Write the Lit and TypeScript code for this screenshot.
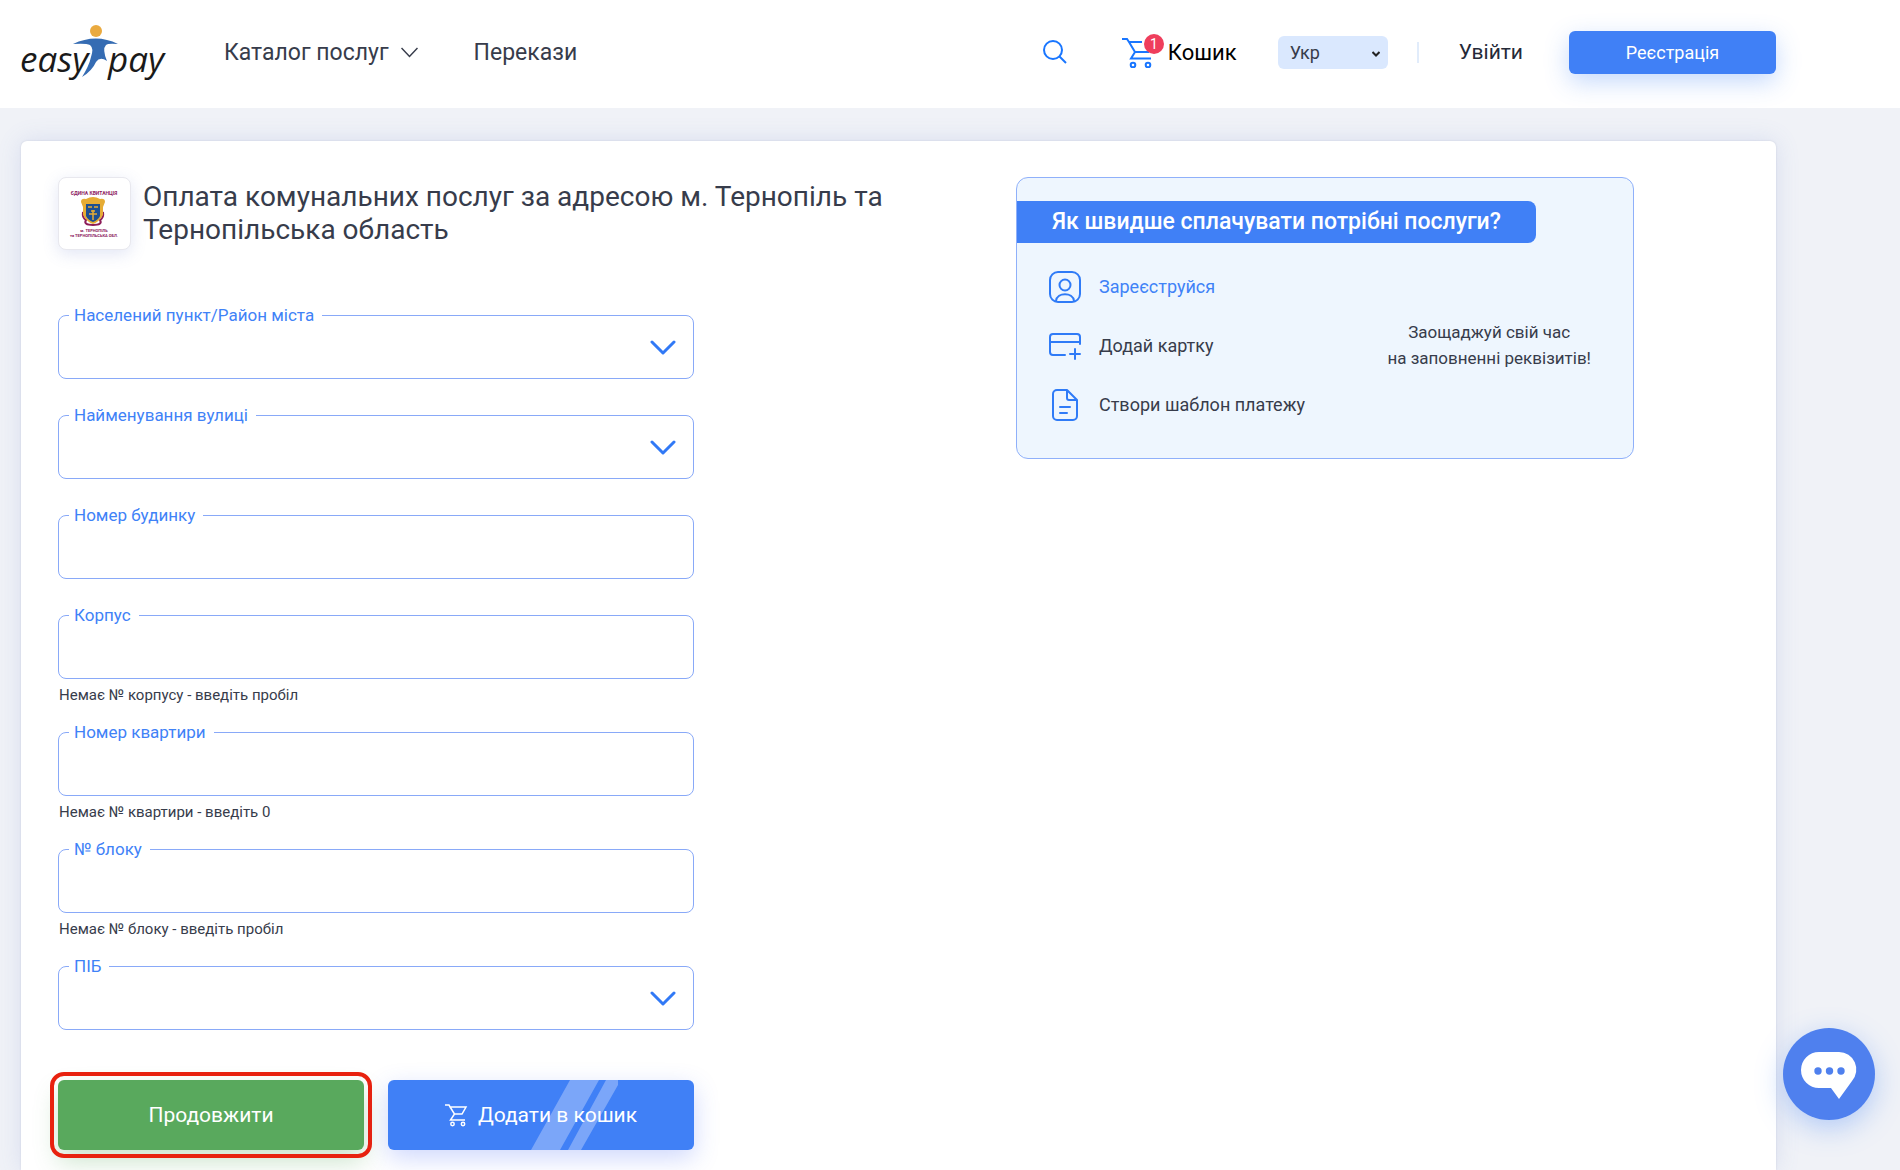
import { LitElement, html, css, nothing } from "lit";
import { customElement } from "lit/decorators.js";

interface Field {
  id: string;
  label: string;
  kind: "select" | "text";
  hint?: string;
}

const FIELDS: Field[] = [
  { id: "district", label: "Населений пункт/Район міста", kind: "select" },
  { id: "street", label: "Найменування вулиці", kind: "select" },
  { id: "house", label: "Номер будинку", kind: "text" },
  { id: "building", label: "Корпус", kind: "text", hint: "Немає № корпусу - введіть пробіл" },
  { id: "flat", label: "Номер квартири", kind: "text", hint: "Немає № квартири - введіть 0" },
  { id: "block", label: "№ блоку", kind: "text", hint: "Немає № блоку - введіть пробіл" },
  { id: "person", label: "ПІБ", kind: "select" },
];

@customElement("site-header")
class SiteHeader extends LitElement {
  static styles = css`
    :host { display: block; background: #fff; }
    .bar {
      box-sizing: border-box;
      height: 108px;
      padding: 0 124px 4px 20px;
      display: flex;
      align-items: center;
      font-size: 22px;
      color: #373c4b;
    }
    a { color: inherit; text-decoration: none; }
    svg { display: block; fill: none; }
    .logo { margin-right: 54px; }
    .logo text {
      font-family: "Open Sans", sans-serif;
      font-style: italic; font-weight: 500; font-size: 35px; fill: #1a1a1a;
    }
    .nav { display: flex; align-items: center; gap: 56px; flex: 1; font-size: 23px; }
    .menu {
      display: flex; align-items: center; gap: 12px;
      border: 0; padding: 0; background: none; font: inherit; color: inherit;
    }
    .search { border: 0; padding: 0; background: none; margin-right: 55px; }
    .cart { display: flex; align-items: center; gap: 4px; color: #000; margin-right: 41px; }
    .cart-icon { position: relative; width: 42px; height: 32px; }
    .badge {
      position: absolute; left: 22px; top: -2px;
      width: 20px; height: 20px; border-radius: 50%;
      background: #ef3e5c; color: #fff;
      font-size: 14px; line-height: 20px; text-align: center;
    }
    .lang { position: relative; margin-right: 29px; }
    .lang select {
      appearance: none; display: block; border: 0; border-radius: 6px;
      width: 110px; height: 33px; padding: 0 12px;
      background: #dae8fe; color: #373c4b; font: 18px Roboto, sans-serif;
    }
    .lang svg { position: absolute; right: 8px; top: 15px; pointer-events: none; }
    .rule { width: 2px; height: 21px; background: #e1ecfb; margin-right: 40px; }
    .login { color: #252938; font-size: 21px; margin-right: 46px; }
    .register {
      width: 207px; height: 43px; border: 0; border-radius: 6px;
      background: #4080f6; color: #fff; font: 18px Roboto, sans-serif;
      box-shadow: 0 8px 24px rgba(64, 128, 246, 0.3);
    }
  `;

  render() {
    return html`
      <header class="bar">
        <a class="logo" href="#" aria-label="easypay">
          <svg width="150" height="62" viewBox="0 0 150 62">
            <text x="0" y="51">easy</text>
            <text x="88" y="51">pay</text>
            <circle cx="76" cy="10" r="6" fill="#eaaa3f" />
            <path fill="#356cb3" d="M53 23Q76 12 98 23Q88 22 86 24Q82 28 87 40Q80 35 76 41Q72 50 62 56Q69 45 71 36Q74 27 70 24Q66 22 53 23Z" />
          </svg>
        </a>
        <nav class="nav">
          <button class="menu">
            Каталог послуг
            <svg width="17" height="11" viewBox="0 0 17 11" stroke="#373c4b" stroke-width="1.500"><path d="M.500 1l8 8.500 8-8.500" /></svg>
          </button>
          <a href="#">Перекази</a>
        </nav>
        <button class="search" aria-label="Пошук">
          <svg width="24" height="24" viewBox="0 0 24 24" stroke="#1976ff" stroke-width="2">
            <circle cx="10" cy="10" r="9" /><path d="M16.500 16.500L23 23" />
          </svg>
        </button>
        <a class="cart" href="#">
          <span class="cart-icon">
            <svg width="31" height="32" viewBox="0 0 31 32" stroke="#1976ff" stroke-width="2">
              <path d="M0 3h5l2 3M7 6h13M7 6l6 10h14M13 16l-4 6.500h20" />
              <circle cx="11" cy="29" r="2.300" /><circle cx="26" cy="29" r="2.300" />
            </svg>
            <span class="badge">1</span>
          </span>
          Кошик
        </a>
        <div class="lang">
          <select aria-label="Мова"><option>Укр</option></select>
          <svg width="8" height="6" viewBox="0 0 8 6" stroke="#222" stroke-width="2"><path d="M.500 1L4 4.500 7.500 1" /></svg>
        </div>
        <span class="rule"></span>
        <a class="login" href="#">Увійти</a>
        <button class="register">Реєстрація</button>
      </header>
    `;
  }
}

@customElement("outlined-field")
class OutlinedField extends LitElement {
  static properties = { field: { attribute: false } };
  declare field: Field;

  static styles = css`
    :host { display: block; }
    .frame {
      position: relative; box-sizing: border-box; min-width: 0; height: 74px;
      margin: 0; padding: 0 0 0 10px;
      border: 1px solid #89a9f8; border-radius: 8px;
    }
    .legend { padding: 0 8px 0 5px; height: 20px; font-size: 17px; line-height: 20px; color: #3f82f7; }
    .control {
      appearance: none; box-sizing: border-box; display: block;
      width: 100%; height: 52px; padding: 0 60px 0 6px;
      border: 0; outline: 0; background: none; font: 18px Roboto, sans-serif; color: #373c4b;
    }
    .chevron { position: absolute; right: 17px; top: 15px; fill: none; pointer-events: none; }
    .hint { margin: 6px 0 0 1px; font-size: 15px; line-height: 20px; color: #373c4b; }
  `;

  render() {
    const f = this.field;
    return html`
      <fieldset class="frame">
        <legend class="legend"><label for=${f.id}>${f.label}</label></legend>
        ${f.kind === "select"
          ? html`<select class="control" id=${f.id}><option></option></select>
              <svg class="chevron" width="26" height="16" viewBox="0 0 26 16" stroke="#3179f6" stroke-width="3" stroke-linecap="round" stroke-linejoin="round">
                <path d="M2 2l11 11L24 2" />
              </svg>`
          : html`<input class="control" id=${f.id} type="text" />`}
      </fieldset>
      ${f.hint ? html`<p class="hint">${f.hint}</p>` : nothing}
    `;
  }
}

@customElement("tips-panel")
class TipsPanel extends LitElement {
  static styles = css`
    :host {
      display: block; box-sizing: border-box; height: 282px;
      border: 1px solid #8fb0fa; border-radius: 12px; background: #eef6fe; color: #373c4b;
    }
    .title {
      width: fit-content; margin: 23px 0 0; padding: 0 35px; border-radius: 0 8px 8px 0;
      background: #4080f6; color: #fff; font-size: 23px; font-weight: 500; line-height: 42px;
    }
    .body { display: flex; justify-content: space-between; padding: 14px 42px 0 32px; }
    .steps { margin: 0; padding: 0; list-style: none; }
    .step { display: flex; align-items: center; gap: 18px; height: 59px; font-size: 18px; }
    .step svg { fill: none; stroke: #2f7bf7; stroke-width: 2; stroke-linecap: round; stroke-linejoin: round; }
    .step a { color: #3f82f7; text-decoration: none; }
    .note { margin: 62px 0 0; font-size: 17px; line-height: 26px; text-align: center; }
  `;

  render() {
    return html`
      <h2 class="title">Як швидше сплачувати потрібні послуги?</h2>
      <div class="body">
        <ul class="steps">
          <li class="step">
            <svg width="32" height="32" viewBox="0 0 32 32">
              <rect x="1" y="1" width="30" height="30" rx="8" /><circle cx="16" cy="14" r="5.500" />
              <path d="M7 30c1-9 17-9 18 0" />
            </svg>
            <a href="#">Зареєструйся</a>
          </li>
          <li class="step">
            <svg width="32" height="32" viewBox="0 0 32 32">
              <path d="M31 14V7a3 3 0 0 0-3-3H4a3 3 0 0 0-3 3v15a3 3 0 0 0 3 3h12M1 12h30M21 24h10M26 19v10" />
            </svg>
            Додай картку
          </li>
          <li class="step">
            <svg width="32" height="32" viewBox="0 0 32 32">
              <path d="M18 1H8a4 4 0 0 0-4 4v22a4 4 0 0 0 4 4h16a4 4 0 0 0 4-4V11zM18 1v8a2 2 0 0 0 2 2h8M11 18h10M11 24h7" />
            </svg>
            Створи шаблон платежу
          </li>
        </ul>
        <p class="note">Заощаджуй свій час<br />на заповненні реквізитів!</p>
      </div>
    `;
  }
}

@customElement("app-root")
class AppRoot extends LitElement {
  static styles = css`
    :host {
      display: flex; flex-direction: column; min-height: 100vh;
      background: #f0f2f7; font-family: Roboto, sans-serif; color: #373c4b;
    }
    .main { flex: 1; display: flex; flex-direction: column; padding: 33px 124px 0 21px; }
    .card {
      flex: 1; display: grid; grid-template-columns: minmax(0, 950fr) minmax(0, 618fr); column-gap: 8px;
      align-items: start; padding: 36px 142px 20px 37px;
      background: #fff; border-radius: 6px 6px 0 0; box-shadow: 0 0 24px rgba(96, 116, 200, 0.16), 0 0 2px rgba(80, 90, 130, 0.2);
    }
    .heading { display: flex; gap: 12px; }
    .emblem {
      box-sizing: border-box; flex: none; width: 73px; height: 73px;
      border: 1px solid #e8e8ee; border-radius: 8px; background: #fff;
      box-shadow: 0 4px 16px rgba(96, 116, 200, 0.18);
    }
    .emblem svg { display: block; }
    .title { margin: 3px 0 0; max-width: 760px; font-size: 28px; font-weight: 400; line-height: 33px; }
    .form { width: 636px; max-width: 100%; margin-top: 55px; display: flex; flex-direction: column; gap: 26px; }
    .with-hint { margin-bottom: -9px; }
    .actions { display: grid; grid-template-columns: 1fr 1fr; gap: 24px; margin-top: 24px; }
    .action {
      position: relative; display: flex; align-items: center; justify-content: center;
      height: 70px; border: 0; border-radius: 6px; padding: 0; color: #fff; font: 21px Roboto, sans-serif;
    }
    .next { background: #59a95d; outline: 4px solid #e8220f; outline-offset: 4px; box-shadow: 0 12px 24px rgba(89, 169, 93, 0.3); }
    .add { background: #4080f6; box-shadow: 0 8px 24px rgba(64, 100, 246, 0.25); }
    .shine { position: absolute; left: 143px; top: 0; }
    .add-label { position: relative; display: flex; align-items: center; gap: 10px; }
    .chat {
      position: fixed; right: 25px; bottom: 50px; width: 92px; height: 92px; padding: 0; border: 0; border-radius: 50%;
      background: #4f80ee; box-shadow: 0 8px 28px rgba(64, 128, 246, 0.35);
    }
    .chat svg { display: block; }
  `;

  render() {
    return html`
      <site-header></site-header>
      <main class="main">
        <div class="card">
          <section>
            <div class="heading">
              <div class="emblem">
                <svg width="71" height="71" viewBox="0 0 71 71" role="img" aria-label="Єдина квитанція">
                  <g fill="#8c2060" font-family="Roboto, sans-serif" font-weight="700" text-anchor="middle">
                    <text x="35" y="17" font-size="5">ЄДИНА КВИТАНЦІЯ</text>
                    <text x="35" y="54" font-size="4">м. ТЕРНОПІЛЬ</text>
                    <text x="35" y="59" font-size="4">та ТЕРНОПІЛЬСЬКА ОБЛ.</text>
                  </g>
                  <path fill="none" stroke="#8c1c58" stroke-width="2" d="M24 34q-1 6 3 8-3 5 7 5t7-5q4-2 3-8" />
                  <path fill="#e6ac35" d="M22 24q0-4 5-3 7-4 14 0 5-1 5 3l-2 5v8q-4 7-10 9-6-2-10-9v-8z" />
                  <path fill="#1d4f91" d="M27 26h14v12q-2 4-7 6-5-2-7-6z" />
                  <path stroke="#e6ac35" stroke-width="1.500" d="M34 32v10M30 36h8M29 29h4M35 29h4M32 33h4" />
                </svg>
              </div>
              <h1 class="title">Оплата комунальних послуг за адресою м. Тернопіль та Тернопільська область</h1>
            </div>
            <form class="form">
              ${FIELDS.map((f) => html`<outlined-field class=${f.hint ? "with-hint" : ""} .field=${f}></outlined-field>`)}
              <div class="actions">
                <button class="action next" type="button">Продовжити</button>
                <button class="action add" type="button">
                  <svg class="shine" width="88" height="70" viewBox="0 0 88 70" fill="#7ba6f9">
                    <path d="M0 70L39 0h29L29 70zM37 70L75 0h12v5L50 70z" />
                  </svg>
                  <span class="add-label">
                    <svg width="23" height="26" viewBox="0 0 23 26" fill="none" stroke="#fff" stroke-width="1.500">
                      <path d="M0 3h4l1.500 3M5.500 5H21l-4 7H9.500M4.500 4L9.500 12l-4 6H20" />
                      <circle cx="7.500" cy="22" r="1.700" /><circle cx="18" cy="22" r="1.700" />
                    </svg>
                    Додати в кошик
                  </span>
                </button>
              </div>
            </form>
          </section>
          <tips-panel></tips-panel>
        </div>
      </main>
      <button class="chat" aria-label="Чат">
        <svg width="92" height="92" viewBox="0 0 92 92">
          <path fill="#fff" d="M36 24h20a17.500 17.500 0 0 1 13 29L56 71l-8-11H36a18 18 0 0 1 0-36z" />
          <g fill="#4f80ee"><circle cx="35" cy="43" r="3.700" /><circle cx="46.500" cy="43" r="3.700" /><circle cx="58" cy="43" r="3.700" /></g>
        </svg>
      </button>
    `;
  }
}
